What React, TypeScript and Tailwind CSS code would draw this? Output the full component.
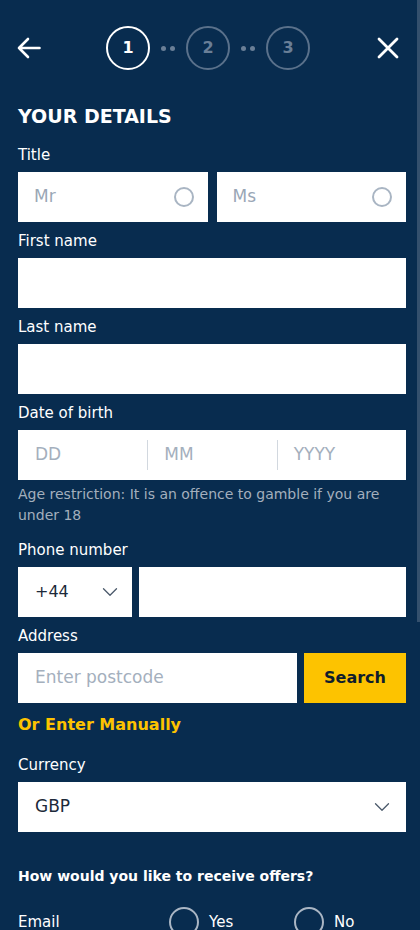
import { ChevronDown } from "lucide-react";

const font = { fontFamily: '"DejaVu Sans", "Open Sans", sans-serif' };

function Step({ n, active }: { n: number; active?: boolean }) {
	return (
		<div
			className={
				active
					? "w-[44px] h-[44px] rounded-full border-2 border-white flex items-center justify-center text-white font-bold text-[16px]"
					: "w-[44px] h-[44px] rounded-full border-2 border-[#5a718b] flex items-center justify-center text-[#6a7f97] font-bold text-[16px]"
			}
		>
			{n}
		</div>
	);
}

function Dots() {
	return (
		<div className="flex gap-[4px] mx-[11px]">
			<span className="w-[5px] h-[5px] rounded-full bg-[#6a7f97]" />
			<span className="w-[5px] h-[5px] rounded-full bg-[#6a7f97]" />
		</div>
	);
}

function Label({ children }: { children: string }) {
	return <div className="text-white text-[15px] leading-[20px] mb-[7px]">{children}</div>;
}

function Radio({ dark }: { dark?: boolean }) {
	return dark ? (
		<span className="w-[30px] h-[30px] rounded-full border-2 border-[#aab6c4]" />
	) : (
		<span className="w-[20px] h-[20px] rounded-full border-2 border-[#a9b5c3]" />
	);
}

export default function App() {
	return (
		<div style={font} className="relative w-[420px] min-h-[930px] bg-[#082c4f] pl-[18px] pr-[14px] overflow-hidden">
			<div className="absolute right-0 top-0 w-[3px] h-[622px] bg-[#34506d]" />

			<div className="flex items-center h-[96px]">
				<svg width="24" height="22" viewBox="0 0 24 22" className="-ml-[1px]" fill="none" stroke="white" strokeWidth="2.6" strokeLinecap="round" strokeLinejoin="round">
					<path d="M2 11 H22.5 M11 2 L2 11 L11 20" />
				</svg>
				<div className="flex items-center ml-[65px]">
					<Step n={1} active />
					<Dots />
					<Step n={2} />
					<Dots />
					<Step n={3} />
				</div>
				<svg width="22" height="22" viewBox="0 0 22 22" className="ml-auto mr-[7px]" fill="none" stroke="white" strokeWidth="2.8" strokeLinecap="round">
					<path d="M2 2 L20 20 M20 2 L2 20" />
				</svg>
			</div>

			<h1 className="text-white font-bold text-[19px] leading-[24px] mt-[8px] mb-[17px]">YOUR DETAILS</h1>

			<Label>Title</Label>
			<div className="flex gap-[9px] mb-[9px]">
				<div className="flex-1 h-[50px] bg-white flex items-center justify-between pl-[16px] pr-[14px]">
					<span className="text-[#9aa7b6] text-[17px]">Mr</span>
					<Radio />
				</div>
				<div className="flex-1 h-[50px] bg-white flex items-center justify-between pl-[16px] pr-[14px]">
					<span className="text-[#9aa7b6] text-[17px]">Ms</span>
					<Radio />
				</div>
			</div>

			<Label>First name</Label>
			<div className="h-[50px] bg-white mb-[9px]" />

			<Label>Last name</Label>
			<div className="h-[50px] bg-white mb-[9px]" />

			<Label>Date of birth</Label>
			<div className="h-[50px] bg-white grid grid-cols-3 items-center">
				<div className="pl-[17px] text-[#a4afbd] text-[17px]">DD</div>
				<div className="pl-[16px] text-[#a4afbd] text-[17px] border-l border-[#d2d8df] h-[30px] flex items-center">MM</div>
				<div className="pl-[16px] text-[#a4afbd] text-[17px] border-l border-[#d2d8df] h-[30px] flex items-center">YYYY</div>
			</div>
			<p className="text-[#a3afbd] text-[14px] leading-[21px] mt-[4px] mb-[14px]">
				Age restriction: It is an offence to gamble if you are under 18
			</p>

			<Label>Phone number</Label>
			<div className="flex gap-[7px] mb-[9px]">
				<div className="w-[114px] h-[50px] bg-white flex items-center justify-between pl-[17px] pr-[9px]">
					<span className="text-[#1d2a3a] text-[16px]">+44</span>
					<ChevronDown className="w-[26px] h-[26px] text-[#4b5a6b]" strokeWidth={1.2} />
				</div>
				<div className="flex-1 h-[50px] bg-white" />
			</div>

			<Label>Address</Label>
			<div className="flex gap-[7px]">
				<div className="flex-1 h-[50px] bg-white flex items-center pl-[17px]">
					<span className="text-[#a4afbd] text-[17px]">Enter postcode</span>
				</div>
				<button className="w-[102px] h-[50px] bg-[#fdc300] text-[#0f1d2c] font-bold text-[16px]">Search</button>
			</div>
			<div className="text-[#fdc300] font-bold text-[16px] leading-[24px] mt-[10px] mb-[18px]">Or Enter Manually</div>

			<Label>Currency</Label>
			<div className="h-[50px] bg-white flex items-center justify-between pl-[17px] pr-[11px] mb-[34px]">
				<span className="text-[#1d2a3a] text-[17px]">GBP</span>
				<ChevronDown className="w-[26px] h-[26px] text-[#4b5a6b]" strokeWidth={1.2} />
			</div>

			<div className="text-white font-bold text-[14px] leading-[20px] mb-[21px]">How would you like to receive offers?</div>

			<div className="flex items-center text-white text-[15px]">
				<span className="w-[151px]">Email</span>
				<Radio dark />
				<span className="ml-[10px] w-[85px]">Yes</span>
				<Radio dark />
				<span className="ml-[10px]">No</span>
			</div>
		</div>
	);
}
